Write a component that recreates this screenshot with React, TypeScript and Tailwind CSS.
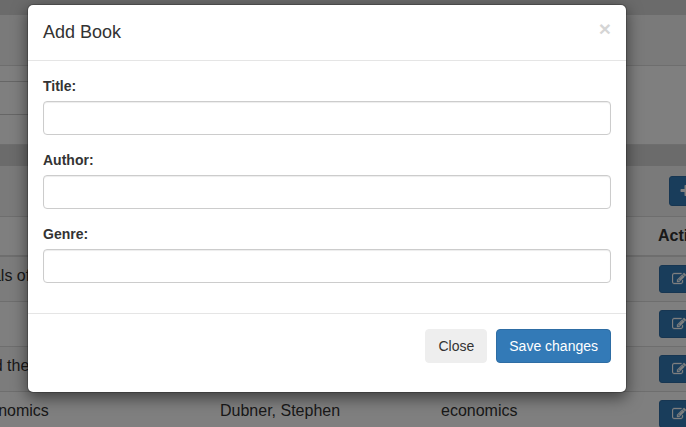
import { useState } from "react";

const books = [
  { title: "Fundamentals of Wavelets", author: "Goswami, Jaideva", genre: "signal_processing" },
  { title: "Data Smart", author: "Foreman, John", genre: "data_science" },
  { title: "God Created the Integers", author: "Hawking, Stephen", genre: "mathematics" },
  { title: "Superfreakonomics", author: "Dubner, Stephen", genre: "economics" },
];

function EditIcon() {
  return (
    <svg viewBox="0 0 1792 1792" className="size-3.5 shrink-0 fill-current stroke-current stroke-[40]" aria-hidden="true">
      <path d="M888 1184l116-116-152-152-116 116v56h96v96h56zm440-720q-16-16-33 1l-350 350q-17 17-1 33t33-1l350-350q17-17 1-33zm80 594v190q0 119-84.5 203.5t-203.5 84.5h-832q-119 0-203.5-84.5t-84.5-203.5v-832q0-119 84.5-203.5t203.5-84.5h832q63 0 117 25 15 7 18 23 3 17-9 29l-49 49q-14 14-32 8-23-6-45-6h-832q-66 0-113 47t-47 113v832q0 66 47 113t113 47h832q66 0 113-47t47-113v-126q0-13 9-22l64-64q15-15 35-7t20 29zm-96-738l288 288-672 672h-288v-288zm444 132l-92 92-288-288 92-92q28-28 68-28t68 28l152 152q28 28 28 68t-28 68z" />
    </svg>
  );
}

function PlusIcon() {
  return (
    <svg viewBox="0 0 1792 1792" className="size-3.5 shrink-0 fill-current" aria-hidden="true">
      <path d="M1600 736v192q0 40-28 68t-68 28h-416v416q0 40-28 68t-68 28h-192q-40 0-68-28t-28-68v-416h-416q-40 0-68-28t-28-68v-192q0-40 28-68t68-28h416v-416q0-40 28-68t68-28h192q40 0 68 28t28 68v416h416q40 0 68 28t28 68z" />
    </svg>
  );
}

function Field({ id, label }: { id: string; label: string }) {
  const [value, setValue] = useState("");
  return (
    <div className="mb-[15px]">
      <label htmlFor={id} className="mb-[5px] block text-sm leading-5 font-bold">
        {label}
      </label>
      <input
        id={id}
        type="text"
        value={value}
        onChange={(e) => setValue(e.target.value)}
        className="block h-[34px] w-full rounded-[4px] border border-[#ccc] bg-white px-3 text-sm shadow-[inset_0_1px_1px_rgba(0,0,0,0.075)]"
      />
    </div>
  );
}

function BooksPage() {
  return (
    <div className="-mr-[97px] -ml-[97px] text-base leading-6">
      <section className="mt-[15px]">
        <div className="h-[51px] border-b border-[#ddd] bg-[#f5f5f5]" />
        <div className="border-b border-[#ddd] bg-white px-[15px] pt-[15px] pb-[29px]">
          <input
            type="text"
            aria-label="Search"
            className="block h-[34px] w-1/2 rounded-[4px] border border-[#ccc] bg-white px-3"
          />
        </div>
      </section>
      <section className="mt-[21px] bg-white">
        <div className="flex h-[51px] items-center border-b border-[#ddd] bg-[#f5f5f5] pl-[766px]">
          <button type="button" aria-label="Add" className="flex h-[30px] w-[60px] items-center rounded-[3px] border border-[#2e6da4] bg-[#337ab7] px-[9px] text-white">
            <PlusIcon />
          </button>
        </div>
        <table className="w-full table-fixed border-collapse text-left">
          <colgroup>
            <col className="w-[309px]" />
            <col className="w-[221px]" />
            <col className="w-[218px]" />
            <col />
          </colgroup>
          <thead>
            <tr className="h-[39px] border-b-2 border-[#ddd] font-bold">
              <th className="px-[7px]">Title</th>
              <th className="px-[7px]">Author</th>
              <th className="px-[7px]">Genre</th>
              <th className="px-[7px]">Action</th>
            </tr>
          </thead>
          <tbody>
            {books.map((book) => (
              <tr key={book.title} className="h-[45px] border-b border-[#ddd] odd:bg-[#f9f9f9]">
                <td className="px-2 pt-[7px] align-top">{book.title}</td>
                <td className="px-2 pt-[7px] align-top">{book.author}</td>
                <td className="px-2 pt-[7px] align-top">{book.genre}</td>
                <td className="px-2 align-middle">
                  <button type="button" aria-label="Edit" className="flex h-7 w-10 items-center justify-center rounded-[3px] border border-[#2e6da4] bg-[#337ab7] text-white">
                    <EditIcon />
                  </button>
                </td>
              </tr>
            ))}
          </tbody>
        </table>
      </section>
    </div>
  );
}

export default function App() {
  return (
    <div className="relative flow-root h-screen overflow-hidden bg-[#d6d6d6] font-['Liberation_Sans',Arial,sans-serif] text-[#333]">
      <BooksPage />
      <div className="absolute inset-0 bg-black/50">
        <div
          role="dialog"
          aria-modal="true"
          aria-labelledby="dialog-title"
          className="mt-1 mr-[59px] ml-[27px] rounded-md border border-black/20 bg-white bg-clip-padding shadow-[0_5px_15px_rgba(0,0,0,0.5)]"
        >
          <header className="flex items-start justify-between border-b border-[#e5e5e5] px-[15px] pt-3.5 pb-[15px]">
            <h4 id="dialog-title" className="text-lg leading-[26px]">
              Add Book
            </h4>
            <button type="button" aria-label="Close dialog" className="text-[21px] leading-5 font-bold opacity-20">
              ×
            </button>
          </header>
          <div className="p-[15px]">
            <Field id="book-title" label="Title:" />
            <Field id="book-author" label="Author:" />
            <Field id="book-genre" label="Genre:" />
          </div>
          <footer className="flex justify-end gap-[9px] border-t border-[#e5e5e5] px-[15px] pt-[15px] pb-[29px] text-sm leading-5">
            <button type="button" className="h-[34px] rounded-[4px] border border-[#eee] bg-[#eee] px-3">
              Close
            </button>
            <button type="button" className="h-[34px] rounded-[4px] border border-[#2e6da4] bg-[#337ab7] px-3 text-white">
              Save changes
            </button>
          </footer>
        </div>
      </div>
    </div>
  );
}
